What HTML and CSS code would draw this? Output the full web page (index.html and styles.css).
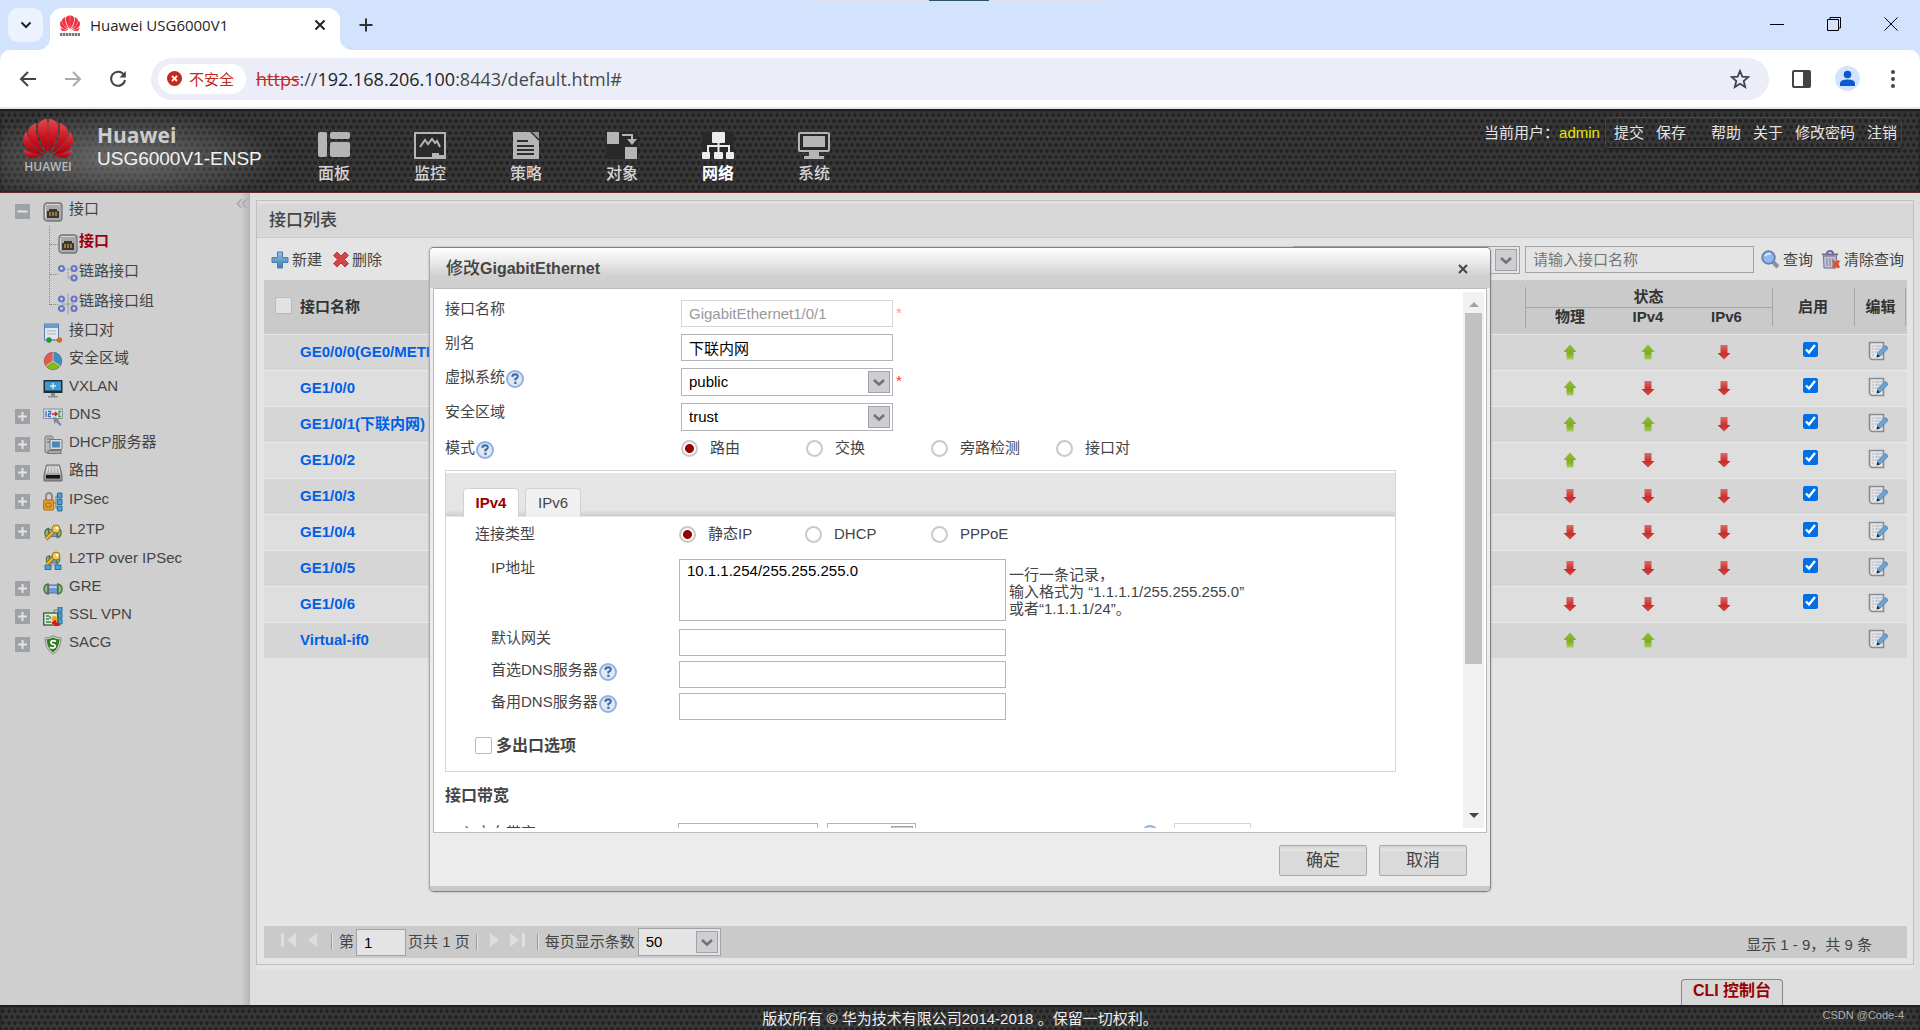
FILE: index.html
```html
<!DOCTYPE html>
<html lang="zh-CN">
<head>
<meta charset="utf-8">
<title>Huawei USG6000V1</title>
<link rel="stylesheet" href="styles.css">
</head>
<body>
<svg class="sprite" aria-hidden="true">
  <defs>
    <linearGradient id="g-red" x1="0" y1="0" x2="0" y2="1"><stop offset="0" stop-color="#dd4a48"/><stop offset=".5" stop-color="#cc1420"/><stop offset="1" stop-color="#a8000e"/></linearGradient>
    <linearGradient id="g-up" x1="0" y1="0" x2="0" y2="1"><stop offset="0" stop-color="#8fbb3a"/><stop offset=".6" stop-color="#7fae1e"/><stop offset="1" stop-color="#a9cb63"/></linearGradient>
    <linearGradient id="g-down" x1="0" y1="0" x2="0" y2="1"><stop offset="0" stop-color="#da6d66"/><stop offset=".6" stop-color="#c92b2b"/><stop offset="1" stop-color="#d05046"/></linearGradient>
    <linearGradient id="g-blue" x1="0" y1="0" x2="0" y2="1"><stop offset="0" stop-color="#8fc0e6"/><stop offset="1" stop-color="#3f7fb8"/></linearGradient>
    <linearGradient id="g-metal" x1="0" y1="0" x2="0" y2="1"><stop offset="0" stop-color="#c9c9c9"/><stop offset="1" stop-color="#8b8b8b"/></linearGradient>
    <g id="petals">
      <path d="M24.400 34C19 27 13 14 15 5C17 1 21 0 24.400 0C25 8 25 22 24.400 34Z"/>
      <path d="M22.500 35C13 30 4 20 5 12C6 8 10 5 13.500 4C11.500 14 16 26 22.500 35Z"/>
      <path d="M20.500 36C11 36 1 31 0 22C0 18 1 15 3 12.500C6 22 13 31 20.500 36Z"/>
      <path d="M19.500 37C13 38 8 41 4 37C2 35 1 33 1 31C8 34 14 36 19.500 37Z"/>
    </g>
    <symbol id="i-logo" viewBox="0 0 50 40"><use href="#petals"/><use href="#petals" transform="translate(50 0) scale(-1 1)"/></symbol>
    <symbol id="i-up" viewBox="0 0 14 16"><path d="M7 .5L13.500 8H10.500V15.500H3.500V8H.5Z" fill="url(#g-up)"/></symbol>
    <symbol id="i-down" viewBox="0 0 14 16"><path d="M7 15.500L13.500 9H10.500V1H3.500V9H.5Z" fill="url(#g-down)"/></symbol>
    <symbol id="i-edit" viewBox="0 0 20 20"><path d="M1.500 1.500H15.500V18.500H3.500L1.500 16.500Z" fill="#e4e6e8" stroke="#868b95" stroke-width="1.600"/><path d="M4 5H6M7 5H14M4 8H6M7 8H13M4 11H6M7 11H10M4 14H6" stroke="#aeb2b8"/><path d="M9 15.500L10 11.500L16.500 5Q19.500 4 19.500 8L13 14.500Z" fill="#6ea3d2" stroke="#4a7dac" stroke-width=".8"/><path d="M8.500 16.500L9.500 13L12 15.500Z" fill="#223"/></symbol>
    <symbol id="i-help" viewBox="0 0 18 18"><circle cx="9" cy="9" r="8" fill="#dfe8f3" stroke="#8fb0e4" stroke-width="2"/><path d="M6.300 6.800Q6.500 4.300 9.200 4.300Q12 4.400 11.800 6.700Q11.600 8 9.400 9V10.400" fill="none" stroke="#3d67a8" stroke-width="2"/><rect x="8.300" y="11.800" width="2.200" height="2.200" fill="#3d67a8"/></symbol>
    <symbol id="i-chev" viewBox="0 0 22 22"><rect x=".5" y=".5" width="21" height="21" fill="#ccced2" stroke="#a2a3a7"/><path d="M6 9L11 13.500L16 9" fill="none" stroke="#707276" stroke-width="2.500"/></symbol>
    <symbol id="i-port" viewBox="0 0 20 20"><rect x="1" y="1" width="18" height="18" rx="3" fill="#a9a9a9" stroke="#777" stroke-width="1.300"/><path d="M2.500 4V16M3 2.500H17" stroke="#d8d8d8"/><path d="M4 9H6V7H14V9H16V16H4Z" fill="#3a3733"/><path d="M7 10V14M10 10V14M13 10V14" stroke="#b8923c" stroke-width="1.500"/></symbol>
    <symbol id="i-link" viewBox="0 0 20 20"><path d="M3 5H17M10 5V14H17" stroke="#999" stroke-dasharray="2 1" fill="none"/><g fill="#c9d3ef" stroke="#6478c0" stroke-width="2.200"><circle cx="3.500" cy="4.500" r="2.500"/><circle cx="16" cy="4.500" r="2.500"/><circle cx="16" cy="14" r="2.500"/></g></symbol>
    <symbol id="i-linkgrp" viewBox="0 0 20 20"><path d="M10 0V20M4 10H16" stroke="#999" fill="none"/><g fill="#c9d3ef" stroke="#6478c0" stroke-width="2.200"><circle cx="3.500" cy="5" r="2.500"/><circle cx="16" cy="5" r="2.500"/><circle cx="3.500" cy="14.500" r="2.500"/><circle cx="16" cy="14.500" r="2.500"/></g></symbol>
    <symbol id="i-pair" viewBox="0 0 20 20"><rect x="1.500" y="1" width="14" height="16" fill="#e2e6ee" stroke="#5b7db4"/><rect x="2" y="1" width="13" height="4" fill="#6f98cf"/><path d="M4 8H13M4 11H13" stroke="#a9b1bd"/><path d="M7 17H16" stroke="#777" stroke-dasharray="2 1"/><circle cx="6" cy="17" r="2.700" fill="#1d9a2e"/><circle cx="16.500" cy="17" r="2.700" fill="#dd6a12"/></symbol>
    <symbol id="i-zone" viewBox="0 0 20 20"><path d="M10 10L10 1A9 9 0 0 0 2.500 15Z" fill="#e05a4e"/><path d="M10 10L10 1A9 9 0 0 1 17.500 15Z" fill="#3c8fc8"/><path d="M10 10L2.500 15A9 9 0 0 0 17.500 15Z" fill="#86b822"/><circle cx="10" cy="10" r="8.700" fill="none" stroke="#666" stroke-opacity=".5"/><path d="M10 1V10L3 15M10 10L17 15" stroke="#ddd" stroke-width=".7" fill="none"/></symbol>
    <symbol id="i-vxlan" viewBox="0 0 20 20"><rect x=".5" y="1" width="19" height="13" fill="#222b33"/><rect x="2" y="2.500" width="16" height="9" fill="#3f9ad0"/><path d="M10 4V10M7 7H13" stroke="#d5ecfa" stroke-width="1.500"/><path d="M8 14H12V17H15V18.500H5V17H8Z" fill="#8a8d90"/></symbol>
    <symbol id="i-dns" viewBox="0 0 20 20"><rect x=".7" y="2" width="18.600" height="9.500" fill="#dde" stroke="#8d8d98"/><path d="M3 4V10M5 4.500H7.500V7H5.500V9.500H8" stroke="#3377bb" stroke-width="1.300" fill="none"/><path d="M9 7H14M12 5L14 7L12 9" stroke="#c22" stroke-width="1.400" fill="none"/><path d="M18 4.500H16V9.500H18" stroke="#2a2" stroke-width="1.300" fill="none"/><path d="M10 10L17 11.500L15 13L18.500 17.500L17 19L13 15L11.500 17Z" fill="#8088a0"/></symbol>
    <symbol id="i-dhcp" viewBox="0 0 20 20"><rect x="2" y="1" width="8" height="17" rx="2" fill="#b9bcbc" stroke="#777"/><path d="M4 4H8M4 7H8" stroke="#666"/><rect x="7" y="4.500" width="12" height="10" rx="1" fill="#d6d9da" stroke="#777"/><rect x="9" y="6.500" width="8" height="6" fill="#4e87bb"/><rect x="5" y="15.500" width="13" height="3" fill="#aaa" stroke="#777"/></symbol>
    <symbol id="i-route" viewBox="0 0 20 20"><path d="M3.500 2H16.500L19 12V18H1V12Z" fill="url(#g-metal)" stroke="#666"/><path d="M4.500 4L3.500 10M7 4V10M10 4V10M13 4V10M15.500 4L16.500 10" stroke="#ececec"/><rect x="3" y="12" width="14" height="3.500" fill="#151515"/></symbol>
    <symbol id="i-ipsec" viewBox="0 0 20 20"><path d="M3 9V5Q3 1 6 1Q9 1 9 5V9" fill="none" stroke="#8b8b8b" stroke-width="2"/><rect x=".7" y="8" width="10" height="10" rx="1" fill="#e5a02f" stroke="#a86c10"/><path d="M3 11H8V15H3Z" fill="none" stroke="#a86c10"/><path d="M11 11H13V4H15M13 11V16H15" stroke="#777" fill="none"/><path d="M14.500 1H19V6H14.500ZM14.500 7.500H19V12.500H14.500ZM14.500 14H19V19H14.500Z" fill="#4da0d4" stroke="#27719f"/></symbol>
    <symbol id="i-gre" viewBox="0 0 20 20"><path d="M5 6H15V14H5Z" fill="#6c9dd8" stroke="#5074a4"/><path d="M6 8H14" stroke="#b4d0f0" stroke-width="2"/><path d="M5 5Q1 6 1 10Q1 14 5 15ZM15 5Q19 6 19 10Q19 14 15 15Z" fill="#9db49a" stroke="#3f7d36" stroke-width="1.500"/><path d="M5.500 5V15M14.500 5V15" stroke="#666" stroke-width="1.300"/></symbol>
    <symbol id="i-l2tp" viewBox="0 0 20 20"><use href="#i-gre" y="2" width="20" height="18"/><path d="M3 17L11 9" stroke="#9c7211" stroke-width="4"/><path d="M3 17L11 9" stroke="#e8b93c" stroke-width="2"/><circle cx="13" cy="7" r="4" fill="#f0ca58" stroke="#9c7211"/><circle cx="14" cy="6" r="1.300" fill="#fff"/></symbol>
    <symbol id="i-l2tpip" viewBox="0 0 20 20"><path d="M5 16V13H15V16" stroke="#777" fill="none"/><path d="M2 14H8V18.500H2ZM12 14H18V18.500H12Z" fill="#4da0d4" stroke="#27719f"/><use href="#i-gre" y="1" width="20" height="15"/><path d="M4 13L11 6" stroke="#9c7211" stroke-width="4"/><path d="M4 13L11 6" stroke="#e8b93c" stroke-width="2"/><circle cx="13" cy="5" r="4" fill="#f0ca58" stroke="#9c7211"/><circle cx="14" cy="4" r="1.300" fill="#fff"/></symbol>
    <symbol id="i-ssl" viewBox="0 0 20 20"><path d="M15 0H19V5H15ZM15 6H19V11H15ZM15 12H19V17H15Z" fill="#4da0d4" stroke="#27719f"/><path d="M11 9V3H15" stroke="#777" fill="none"/><rect x=".7" y="6" width="14" height="12" fill="#dfe8dc" stroke="#2f6b3a" stroke-width="1.400"/><path d="M3 9H6M3 12H6M3 15H8M7 9V12" stroke="#3f7f49" stroke-width="1.300"/><circle cx="11.500" cy="12" r="3" fill="#f2a51d"/><path d="M9 16.500L12 14.500L14 19M11 17.500H17" stroke="#d1191c" stroke-width="2.500" fill="none"/></symbol>
    <symbol id="i-sacg" viewBox="0 0 20 20"><path d="M10 .7Q14 3 18 3Q18 14 10 19.300Q2 14 2 3Q6 3 10 .7Z" fill="#d6d6d6" stroke="#888"/><path d="M10 2.500Q13 4 16.500 4.300Q16 13 10 17.500Q4 13 3.500 4.300Q7 4 10 2.500Z" fill="#2e7d1e"/><path d="M13 6.500Q10 4.800 8 6.700Q7.500 8.800 10 9.300Q13 10 12 12.200Q10 14 7 12.200" fill="none" stroke="#fff" stroke-width="1.700"/></symbol>
    <symbol id="i-plus" viewBox="0 0 15 15"><rect width="15" height="15" fill="#9ea1a5"/><path d="M7.500 3V12M3 7.500H12" stroke="#e4e4e4" stroke-width="2"/></symbol>
    <symbol id="i-minus" viewBox="0 0 15 15"><rect width="15" height="15" fill="#9ea1a5"/><path d="M2.500 7.500H12.500" stroke="#e4e4e4" stroke-width="2"/></symbol>
  </defs>
</svg>

<header class="browser">
  <div class="tabstrip">
    <div class="peek"></div>
    <button class="tab-search" aria-label="搜索标签页"><svg width="12" height="8" viewBox="0 0 12 8"><path d="M1.500 1.500L6 6L10.500 1.500" fill="none" stroke="#202124" stroke-width="2"/></svg></button>
    <div class="tab">
      <span class="favicon"><svg width="20" height="17" fill="#ee3344"><use href="#i-logo"/></svg><i></i></span>
      <span class="tab-title">Huawei USG6000V1</span>
      <button class="tab-close" aria-label="关闭"><svg width="12" height="12" viewBox="0 0 12 12"><path d="M1.500 1.500L10.500 10.500M10.500 1.500L1.500 10.500" stroke="#202124" stroke-width="2"/></svg></button>
    </div>
    <button class="tab-new" aria-label="新标签页"><svg width="14" height="14" viewBox="0 0 14 14"><path d="M7 .5V13.500M.5 7H13.500" stroke="#333" stroke-width="2"/></svg></button>
    <div class="win-ctl">
      <svg width="14" height="14" viewBox="0 0 14 14"><path d="M0 7.500H14" stroke="#000"/></svg>
      <svg width="14" height="14" viewBox="0 0 14 14"><path d="M.5 2.500H11.500V13.500H.5ZM3 2V.5H13.500V11H12" fill="none" stroke="#000"/></svg>
      <svg width="14" height="14" viewBox="0 0 14 14"><path d="M.5 .5L13.500 13.500M13.500 .5L.5 13.500" stroke="#000"/></svg>
    </div>
  </div>
  <div class="toolbar">
    <button aria-label="返回"><svg width="18" height="16" viewBox="0 0 18 16"><path d="M9 1L2 8L9 15M2 8H17" fill="none" stroke="#444" stroke-width="2"/></svg></button>
    <button aria-label="前进"><svg width="18" height="16" viewBox="0 0 18 16"><path d="M9 1L16 8L9 15M1 8H16" fill="none" stroke="#aaa" stroke-width="2"/></svg></button>
    <button aria-label="重新加载"><svg width="18" height="18" viewBox="0 0 18 18"><path d="M15 5A7 7 0 1 0 16 10" fill="none" stroke="#444" stroke-width="2"/><path d="M16.800 1V7.500H10.500Z" fill="#444"/></svg></button>
    <div class="omnibox">
      <span class="chip"><svg width="15" height="15" viewBox="0 0 15 15"><circle cx="7.500" cy="7.500" r="7.500" fill="#c5281c"/><path d="M5 5L10 10M10 5L5 10" stroke="#fff" stroke-width="1.800"/></svg>不安全</span>
      <span class="url"><s>https</s>://<b>192.168.206.100</b>:8443/default.html#</span>
      <svg width="20" height="20" viewBox="0 0 20 20"><path d="M10 2L12.300 7.700L18.300 8.100L13.700 12L15.200 18L10 14.700L4.800 18L6.300 12L1.700 8.100L7.700 7.700Z" fill="none" stroke="#444" stroke-width="1.800"/></svg>
    </div>
    <svg class="t-panel" width="19" height="18" viewBox="0 0 19 18"><rect x="1" y="1" width="17" height="16" rx="1" fill="none" stroke="#444" stroke-width="2"/><rect x="11" y="1" width="7" height="16" fill="#444"/></svg>
    <svg class="t-user" width="25" height="25" viewBox="0 0 25 25"><circle cx="12.500" cy="12.500" r="12.500" fill="#d3e3fd"/><circle cx="12.500" cy="8.500" r="3.800" fill="#0b57d0"/><path d="M5 20V17.500Q5 13.500 12.500 13.500Q20 13.500 20 17.500V20Z" fill="#0b57d0"/></svg>
    <svg class="t-menu" width="4" height="18" viewBox="0 0 4 18" fill="#444"><circle cx="2" cy="2" r="2"/><circle cx="2" cy="9" r="2"/><circle cx="2" cy="16" r="2"/></svg>
  </div>
</header>

<div class="page">
  <header class="banner mesh">
    <div class="brand">
      <div class="logo"><svg width="50" height="40" fill="url(#g-red)"><use href="#i-logo"/></svg><span>HUAWEI</span></div>
      <div class="product"><strong>Huawei</strong><span>USG6000V1-ENSP</span></div>
    </div>
    <nav class="mainnav">
      <a href="#"><svg width="32" height="27" viewBox="0 0 32 27" fill="#b5b5b5"><rect width="9" height="25" rx="2"/><rect x="12" width="20" height="7" rx="2"/><rect x="12" y="10" width="20" height="15" rx="2"/></svg>面板</a>
      <a href="#"><svg width="32" height="27" viewBox="0 0 32 27"><rect x="1" y="1" width="30" height="25" fill="#2a2a2a" stroke="#b5b5b5" stroke-width="2"/><path d="M6 15L11 8L14 12L18 7L21 11L23 9L26 15" fill="none" stroke="#b5b5b5" stroke-width="2"/><path d="M18 21H25V23H30V25H18Z" fill="#b5b5b5"/></svg>监控</a>
      <a href="#"><svg width="28" height="27" viewBox="0 0 28 27"><path d="M1 0H18L27 9V27H1Z" fill="#b5b5b5"/><path d="M20 0H27V7Z" fill="#999"/><path d="M5 9H16M5 14H22M5 18H22M5 22H22" stroke="#2f2f2f" stroke-width="2"/></svg>策略</a>
      <a href="#"><svg width="32" height="27" viewBox="0 0 32 27"><rect width="32" height="27" fill="#292929"/><rect x="1" width="12" height="12" fill="#b5b5b5"/><rect x="19" y="15" width="12" height="12" fill="#b5b5b5"/><path d="M16 3H26V9" fill="none" stroke="#b5b5b5" stroke-width="2"/><path d="M21 7H31L26 13Z" fill="#b5b5b5"/></svg>对象</a>
      <a href="#" class="on"><svg width="32" height="27" viewBox="0 0 32 27" fill="#ededed"><rect width="32" height="27" fill="#292929"/><rect x="10" width="13" height="11" rx="1"/><rect y="20" width="8" height="7" rx="1"/><rect x="12" y="20" width="9" height="7" rx="1"/><rect x="24" y="20" width="8" height="7" rx="1"/><path d="M16.500 10V20M6 20V14H27V20" fill="none" stroke="#ededed" stroke-width="2"/></svg>网络</a>
      <a href="#"><svg width="32" height="27" viewBox="0 0 32 27"><rect x="1" y="1" width="30" height="18" rx="1" fill="#292929" stroke="#b5b5b5" stroke-width="2"/><rect x="5" y="4" width="22" height="11" fill="#b5b5b5"/><path d="M11 20H21V24H26V27H6V24H11Z" fill="#b5b5b5"/></svg>系统</a>
    </nav>
    <div class="user">
      <span>当前用户：</span><em>admin</em>
      <div class="links"><a href="#">提交</a><a href="#">保存</a><a href="#" class="far">帮助</a><a href="#">关于</a><a href="#">修改密码</a><a href="#">注销</a></div>
    </div>
  </header>

  <div class="work">
    <aside class="side">
      <span class="collapse">«</span>
      <ul class="tree">
        <li class="first"><svg class="tg"><use href="#i-minus"/></svg><svg class="ic"><use href="#i-port"/></svg><a href="#">接口</a></li>
        <li class="group"><ul>
          <li><svg class="ic"><use href="#i-port"/></svg><a href="#" class="cur">接口</a></li>
          <li><svg class="ic"><use href="#i-link"/></svg><a href="#">链路接口</a></li>
          <li><svg class="ic"><use href="#i-linkgrp"/></svg><a href="#">链路接口组</a></li>
        </ul></li>
        <li><span class="tg"></span><svg class="ic"><use href="#i-pair"/></svg><a href="#">接口对</a></li>
        <li><span class="tg"></span><svg class="ic"><use href="#i-zone"/></svg><a href="#">安全区域</a></li>
        <li><span class="tg"></span><svg class="ic"><use href="#i-vxlan"/></svg><a href="#">VXLAN</a></li>
        <li><svg class="tg"><use href="#i-plus"/></svg><svg class="ic"><use href="#i-dns"/></svg><a href="#">DNS</a></li>
        <li><svg class="tg"><use href="#i-plus"/></svg><svg class="ic"><use href="#i-dhcp"/></svg><a href="#">DHCP服务器</a></li>
        <li><svg class="tg"><use href="#i-plus"/></svg><svg class="ic"><use href="#i-route"/></svg><a href="#">路由</a></li>
        <li class="tall"><svg class="tg"><use href="#i-plus"/></svg><svg class="ic"><use href="#i-ipsec"/></svg><a href="#">IPSec</a></li>
        <li class="tall"><svg class="tg"><use href="#i-plus"/></svg><svg class="ic"><use href="#i-l2tp"/></svg><a href="#">L2TP</a></li>
        <li><span class="tg"></span><svg class="ic"><use href="#i-l2tpip"/></svg><a href="#">L2TP over IPSec</a></li>
        <li><svg class="tg"><use href="#i-plus"/></svg><svg class="ic"><use href="#i-gre"/></svg><a href="#">GRE</a></li>
        <li><svg class="tg"><use href="#i-plus"/></svg><svg class="ic"><use href="#i-ssl"/></svg><a href="#">SSL VPN</a></li>
        <li><svg class="tg"><use href="#i-plus"/></svg><svg class="ic"><use href="#i-sacg"/></svg><a href="#">SACG</a></li>
      </ul>
    </aside>

    <main class="main">
      <section class="panel">
        <h1>接口列表</h1>
        <div class="actions">
          <button><svg width="18" height="18" viewBox="0 0 18 18"><path d="M6.500 1H11.500V6.500H17V11.500H11.500V17H6.500V11.500H1V6.500H6.500Z" fill="url(#g-blue)" stroke="#487dab"/></svg>新建</button>
          <button class="del"><svg width="16" height="17" viewBox="0 0 16 17"><path d="M4 1L8 5L12 1L15.500 4.500L11.500 8.500L15.500 12.500L12 16L8 12L4 16L.5 12.500L4.500 8.500L.5 4.500Z" fill="#cf4848" stroke="#b93a3c"/></svg>删除</button>
          <span class="grow"></span>
          <span class="sel dim filter"><select aria-label="查询条件"><option>接口名称</option></select><svg><use href="#i-chev"/></svg></span>
          <input class="field dim search" placeholder="请输入接口名称" aria-label="接口名称">
          <button><svg width="19" height="19" viewBox="0 0 19 19"><path d="M12 12L17 17" stroke="#8e8e93" stroke-width="4"/><circle cx="7.500" cy="7.500" r="6.300" fill="#8db8f2" stroke="#6580ac" stroke-width="1.800"/><path d="M4 6Q6 3 10 4" stroke="#d7e6fa" stroke-width="2" fill="none"/></svg>查询</button>
          <button class="clear"><svg width="20" height="19" viewBox="0 0 20 19"><path d="M1 4.500H17M6 3.500Q6 1 9 1Q12 1 12 3.500" stroke="#6d6d96" stroke-width="2" fill="none"/><path d="M2.500 6H15.500L15 18H3Z" fill="#c2c2d4" stroke="#6d6d96"/><path d="M6 8V16M9 8V16M12 8V16" stroke="#7d7da3"/><path d="M11 11L13 10L14.700 12L17 10L19 11L17.500 14L19 17L17 18.500L14.700 16.500L12.500 18.500L11 17L12.500 14Z" fill="#e0512f"/></svg>清除查询</button>
        </div>
        <table class="grid">
          <colgroup><col class="c-ck"><col><col class="c-a"><col class="c-b"><col class="c-c"><col class="c-en"><col class="c-ed"></colgroup>
          <thead>
            <tr><th rowspan="2"><input type="checkbox" class="box dimbox" aria-label="全选"></th><th rowspan="2" class="nm">接口名称</th><th colspan="3" class="st">状态</th><th rowspan="2" class="vl">启用</th><th rowspan="2" class="vl vr">编辑</th></tr>
            <tr><th class="s1">物理</th><th>IPv4</th><th class="s3">IPv6</th></tr>
          </thead>
          <tbody>
            <tr><td></td><td class="nm"><a href="#">GE0/0/0(GE0/METH)</a></td><td><svg class="ar"><use href="#i-up"/></svg></td><td><svg class="ar"><use href="#i-up"/></svg></td><td><svg class="ar"><use href="#i-down"/></svg></td><td><input type="checkbox" checked aria-label="启用"></td><td><svg class="ed"><use href="#i-edit"/></svg></td></tr>
            <tr><td></td><td class="nm"><a href="#">GE1/0/0</a></td><td><svg class="ar"><use href="#i-up"/></svg></td><td><svg class="ar"><use href="#i-down"/></svg></td><td><svg class="ar"><use href="#i-down"/></svg></td><td><input type="checkbox" checked aria-label="启用"></td><td><svg class="ed"><use href="#i-edit"/></svg></td></tr>
            <tr><td></td><td class="nm"><a href="#">GE1/0/1(下联内网)</a></td><td><svg class="ar"><use href="#i-up"/></svg></td><td><svg class="ar"><use href="#i-up"/></svg></td><td><svg class="ar"><use href="#i-down"/></svg></td><td><input type="checkbox" checked aria-label="启用"></td><td><svg class="ed"><use href="#i-edit"/></svg></td></tr>
            <tr><td></td><td class="nm"><a href="#">GE1/0/2</a></td><td><svg class="ar"><use href="#i-up"/></svg></td><td><svg class="ar"><use href="#i-down"/></svg></td><td><svg class="ar"><use href="#i-down"/></svg></td><td><input type="checkbox" checked aria-label="启用"></td><td><svg class="ed"><use href="#i-edit"/></svg></td></tr>
            <tr><td></td><td class="nm"><a href="#">GE1/0/3</a></td><td><svg class="ar"><use href="#i-down"/></svg></td><td><svg class="ar"><use href="#i-down"/></svg></td><td><svg class="ar"><use href="#i-down"/></svg></td><td><input type="checkbox" checked aria-label="启用"></td><td><svg class="ed"><use href="#i-edit"/></svg></td></tr>
            <tr><td></td><td class="nm"><a href="#">GE1/0/4</a></td><td><svg class="ar"><use href="#i-down"/></svg></td><td><svg class="ar"><use href="#i-down"/></svg></td><td><svg class="ar"><use href="#i-down"/></svg></td><td><input type="checkbox" checked aria-label="启用"></td><td><svg class="ed"><use href="#i-edit"/></svg></td></tr>
            <tr><td></td><td class="nm"><a href="#">GE1/0/5</a></td><td><svg class="ar"><use href="#i-down"/></svg></td><td><svg class="ar"><use href="#i-down"/></svg></td><td><svg class="ar"><use href="#i-down"/></svg></td><td><input type="checkbox" checked aria-label="启用"></td><td><svg class="ed"><use href="#i-edit"/></svg></td></tr>
            <tr><td></td><td class="nm"><a href="#">GE1/0/6</a></td><td><svg class="ar"><use href="#i-down"/></svg></td><td><svg class="ar"><use href="#i-down"/></svg></td><td><svg class="ar"><use href="#i-down"/></svg></td><td><input type="checkbox" checked aria-label="启用"></td><td><svg class="ed"><use href="#i-edit"/></svg></td></tr>
            <tr><td></td><td class="nm"><a href="#">Virtual-if0</a></td><td><svg class="ar"><use href="#i-up"/></svg></td><td><svg class="ar"><use href="#i-up"/></svg></td><td></td><td></td><td><svg class="ed"><use href="#i-edit"/></svg></td></tr>
          </tbody>
        </table>
        <div class="pager">
          <svg class="p-first" width="15" height="14" viewBox="0 0 15 14" fill="#dedede"><rect width="3" height="14"/><path d="M15 0V14L6 7Z"/></svg>
          <svg class="p-prev" width="9" height="14" viewBox="0 0 9 14" fill="#dedede"><path d="M9 0V14L0 7Z"/></svg>
          <i></i><label for="pg">第</label><input id="pg" class="field dim pg" value="1"><span>页共 1 页</span><i></i>
          <svg class="p-next" width="9" height="14" viewBox="0 0 9 14" fill="#dedede"><path d="M0 0V14L9 7Z"/></svg>
          <svg class="p-last" width="15" height="14" viewBox="0 0 15 14" fill="#dedede"><rect x="12" width="3" height="14"/><path d="M0 0V14L9 7Z"/></svg>
          <i></i><label for="ps">每页显示条数</label><span class="sel dim ps"><select id="ps"><option>50</option></select><svg><use href="#i-chev"/></svg></span>
          <span class="total">显示 1 - 9，共 9 条</span>
        </div>
      </section>
      <button class="cli">CLI 控制台</button>
    </main>
  </div>

  <footer class="foot mesh"><span>版权所有 © 华为技术有限公司2014-2018 。保留一切权利。</span><small>CSDN @Code-4</small></footer>

  <div class="overlay">
    <form class="dialog">
      <div class="d-title"><h2><span>修改</span>GigabitEthernet</h2><button type="button" aria-label="关闭"><svg width="10" height="10" viewBox="0 0 10 10"><path d="M1 1L9 9M9 1L1 9" stroke="#444" stroke-width="2"/></svg></button></div>
      <div class="d-frame">
        <div class="d-body">
          <div class="rows">
            <div class="row"><label for="f1">接口名称</label><input id="f1" class="field w" value="GigabitEthernet1/0/1" disabled><span class="req pale">*</span></div>
            <div class="row"><label for="f2">别名</label><input id="f2" class="field w" value="下联内网"></div>
            <div class="row"><label for="f3">虚拟系统<svg class="help"><use href="#i-help"/></svg></label><span class="sel w"><select id="f3"><option>public</option></select><svg><use href="#i-chev"/></svg></span><span class="req">*</span></div>
            <div class="row"><label for="f4">安全区域</label><span class="sel w"><select id="f4"><option>trust</option></select><svg><use href="#i-chev"/></svg></span></div>
            <div class="row mode"><span class="lb">模式<svg class="help"><use href="#i-help"/></svg></span>
              <label class="rd"><input type="radio" name="mode" checked>路由</label><label class="rd"><input type="radio" name="mode">交换</label><label class="rd"><input type="radio" name="mode">旁路检测</label><label class="rd"><input type="radio" name="mode">接口对</label></div>
          </div>
          <div class="ipbox">
            <div class="tabs"><button type="button" class="act">IPv4</button><button type="button">IPv6</button></div>
            <div class="ipform">
              <div class="row conn"><span class="lb">连接类型</span><label class="rd"><input type="radio" name="conn" checked>静态IP</label><label class="rd"><input type="radio" name="conn">DHCP</label><label class="rd"><input type="radio" name="conn">PPPoE</label></div>
              <div class="row ip"><label for="f5" class="in">IP地址</label><textarea id="f5" class="field wide">10.1.1.254/255.255.255.0</textarea><p>一行一条记录，<br>输入格式为 “1.1.1.1/255.255.255.0”<br>或者“1.1.1.1/24”。</p></div>
              <div class="row"><label for="f6" class="in">默认网关</label><input id="f6" class="field wide"></div>
              <div class="row"><label for="f7" class="in">首选DNS服务器<svg class="help"><use href="#i-help"/></svg></label><input id="f7" class="field wide"></div>
              <div class="row"><label for="f8" class="in">备用DNS服务器<svg class="help"><use href="#i-help"/></svg></label><input id="f8" class="field wide"></div>
              <label class="multi"><input type="checkbox" class="box">多出口选项</label>
            </div>
          </div>
          <h3>接口带宽</h3>
          <div class="row bw"><label for="f9" class="in">入方向带宽</label><input id="f9" class="field bw1"><span class="sel bw2"><select aria-label="单位"><option>Mbps</option></select><svg><use href="#i-chev"/></svg></span><svg class="help bwh"><use href="#i-help"/></svg><input class="field bw3" disabled aria-label="过载保护阈值"></div>
        </div>
        <div class="scroll">
          <svg width="10" height="5" viewBox="0 0 10 5"><path d="M0 5L5 0L10 5Z" fill="#a3a3a3"/></svg>
          <div class="track"><div class="thumb"></div></div>
          <svg width="10" height="5" viewBox="0 0 10 5"><path d="M0 0L5 5L10 0Z" fill="#444"/></svg>
        </div>
      </div>
      <div class="d-foot"><button type="button">确定</button><button type="button">取消</button></div>
    </form>
  </div>
</div>
</body>
</html>
```
FILE: styles.css
```css
* { box-sizing: border-box; }
body {
  margin: 0;
  min-height: 100vh;
  display: flex;
  flex-direction: column;
  font: 15px/18px "Liberation Sans", "Noto Sans CJK SC", sans-serif;
  color: #444;
}
button, input, select, textarea { font: inherit; color: inherit; margin: 0; }
button { border: 0; padding: 0; background: none; }
a { color: inherit; text-decoration: none; }
ul { list-style: none; margin: 0; padding: 0; }
svg { display: block; flex: none; }
.sprite { position: absolute; width: 0; height: 0; }

/* browser chrome */
.browser { background: #d3e2fd; font-family: "Open Sans", "Noto Sans CJK SC", sans-serif; }
.tabstrip { height: 50px; display: flex; align-items: flex-start; padding: 8px 17px 0 8px; position: relative; }
.peek { position: absolute; top: 0; left: 50%; width: 301px; height: 1px; margin-left: -151px; background: linear-gradient(90deg, #e0e2e6 120px, #2e5260 120px, #2e5260 180px, #e0e2e6 180px); }
.tab-search { width: 35px; height: 34px; border-radius: 10px; background: #ecf2fe; display: grid; place-items: center; }
.tab { position: relative; width: 290px; height: 42px; margin-left: 7px; padding: 0 14px 8px 10px; background: #fff; border-radius: 12px 12px 0 0; display: flex; align-items: center; }
.tab::before, .tab::after { content: ""; position: absolute; bottom: 0; width: 12px; height: 12px; }
.tab::before { left: -12px; background: radial-gradient(circle at 0 0, transparent 12px, #fff 12px); }
.tab::after { right: -12px; background: radial-gradient(circle at 100% 0, transparent 12px, #fff 12px); }
.favicon i { display: block; width: 20px; height: 3px; margin-top: 1px; background: repeating-linear-gradient(90deg, #777 0 2px, #ccc 2px 3px); }
.tab-title { flex: 1; margin-left: 10px; color: #1f1f1f; }
.tab-new { margin: 10px 0 0 19px; }
.win-ctl { margin: 9px 0 0 auto; display: flex; gap: 43px; padding-right: 5px; }
.toolbar { background: #fff; border-radius: 10px 10px 0 0; border-bottom: 2px solid #e3eae8; height: 59px; padding: 0 25px 0 19px; display: flex; align-items: center; }
.toolbar button { margin-right: 27px; }
.omnibox { flex: 1; height: 42px; border-radius: 21px; background: #ebeef8; display: flex; align-items: center; padding: 0 19px 0 7px; margin-left: -3px; }
.chip { height: 30px; border-radius: 15px; background: #fff; color: #c5281c; padding: 0 12px 0 9px; display: flex; align-items: center; gap: 7px; }
.url { flex: 1; margin-left: 10px; font-size: 18px; line-height: 24px; color: #474747; }
.url b { font-weight: 400; color: #1f1f1f; }
.url s { color: #c5281c; }
.t-panel { margin-left: 23px; }
.t-user { margin-left: 24px; }
.t-menu { margin-left: 31px; }

/* application shell */
.page { flex: 1; display: flex; flex-direction: column; position: relative; }
.mesh {
  background-color: #373738;
  background-image: radial-gradient(circle, #232324 1px, #232324 2px, transparent 2px), radial-gradient(circle, #232324 1px, #232324 2px, transparent 2px);
  background-size: 6px 12px;
  background-position: 0 0, 3px 6px;
}
.banner { height: 84px; border-bottom: 1px solid #5f2b2c; box-shadow: inset 0 2px 3px #1c1c1c, inset 0 -2px 2px #2a2a2a; display: flex; align-items: flex-start; position: relative; }
.brand { display: flex; width: 286px; height: 82px; padding: 10px 0 0 23px; background: radial-gradient(ellipse at 42% 60%, #8c8c8ca0, transparent 70%); }
.logo { width: 50px; display: flex; flex-direction: column; align-items: center; font: 600 12px/16px "Open Sans", sans-serif; color: #bbb; }
.product { margin: 4px 0 0 24px; display: flex; flex-direction: column; }
.product strong { font: bold 21px/25px "Open Sans", sans-serif; color: #ccc; }
.product span { font-size: 19px; line-height: 22px; color: #f2f2f2; }
.mainnav { display: flex; }
.mainnav a { width: 96px; padding-top: 23px; display: flex; flex-direction: column; align-items: center; gap: 5px; font-size: 16px; line-height: 20px; font-weight: 500; color: #d5d5d5; }
.mainnav a.on { color: #fff; font-weight: bold; }
.user { margin-left: auto; padding: 8px 18px 0 0; display: flex; align-items: center; color: #e4e4e4; }
.user em { font-style: normal; color: #e6e600; margin-right: 5px; }
.links { display: flex; gap: 12px; padding: 5px 4px 5px 8px; line-height: 19px; border: 1px solid #454546; border-radius: 4px; box-shadow: 0 1px 2px #1c1c1c; }
.links .far { margin-left: 13px; }
.work { flex: 1; display: flex; }

/* navigation tree */
.side { width: 250px; position: relative; background: linear-gradient(90deg, transparent 241px, #b4b4b4 250px), #cfcfcf; }
.collapse { position: absolute; top: 0; right: 2px; font-size: 22px; line-height: 20px; color: #aaa; }
.tree li { display: flex; align-items: center; height: 28px; padding-left: 15px; }
.tree .first { height: 32px; }
.tree .tall { height: 30px; }
.tg { width: 15px; height: 15px; margin: 4px 13px 0 0; }
.ic { width: 20px; height: 20px; margin: 6px 6px 0 0; }
.tree .group { height: auto; padding: 1px 0 0 49px; }
.group ul { position: relative; }
.group ul::before { content: ""; position: absolute; top: 0; left: 0; height: 79px; border-left: 1px dotted #888; }
.tree .group li { position: relative; height: 30px; padding-left: 9px; }
.group li::before { content: ""; position: absolute; left: 1px; top: 18px; width: 8px; border-top: 1px dotted #888; }
.group .ic { margin-right: 1px; }
.cur { color: #990010; font-weight: bold; }

/* interface list */
.main { flex: 1; display: flex; flex-direction: column; background: #dedede; padding: 7px 6px 0; }
.panel { flex: 1; display: flex; flex-direction: column; border: 1px solid #bfbfbf; background: #e4e4e4; box-shadow: 0 5px 0 #e4e4e4; }
h1 { margin: 0; padding: 3px 12px 0; font-size: 17px; line-height: 33px; font-weight: 500; background: linear-gradient(#e4e4e4 1px, #d7d7d7 4px); border-bottom: 1px solid #c9c9c9; }
.actions { display: flex; align-items: center; height: 42px; padding: 1px 9px 0 14px; }
.actions button { display: flex; align-items: center; gap: 3px; }
.actions .del { margin-left: 11px; }
.actions .clear { margin-left: 8px; }
.grow { flex: 1; }
.field { height: 27px; border: 1px solid #b4b5ba; background: #fff; border-radius: 0; padding: 0 7px; color: #000; outline: 0; }
.field:disabled { border-color: #d5d5d8; color: #999; }
.field.dim { background: #e4e4e4; border-color: #a2a3a7; }
.sel { position: relative; display: block; height: 28px; }
.sel select { width: 100%; height: 100%; appearance: none; border: 1px solid #b4b5ba; border-radius: 0; background: #fff; color: #000; padding: 0 7px; }
.sel svg { position: absolute; top: 3px; right: 3px; width: 22px; height: 22px; pointer-events: none; }
.dim select { background: #e4e4e4; border-color: #a2a3a7; }
.filter { width: 227px; margin-right: 5px; }
.search { width: 229px; margin-right: 7px; }
.search::placeholder { color: #757575; }
.grid { width: auto; margin: 0 6px 0 7px; table-layout: fixed; border-collapse: collapse; }
.c-ck { width: 36px; } .c-a { width: 90px; } .c-b { width: 66px; } .c-c { width: 91px; } .c-en { width: 82px; } .c-ed { width: 53px; }
.grid th { height: 27px; padding: 0; background-color: #cacaca; background-repeat: no-repeat; color: #333; font-weight: bold; }
.grid thead tr + tr th { padding-bottom: 7px; }
.grid .st { padding-top: 7px; border-bottom: 1px solid #a5a5a5; background-image: linear-gradient(#a5a5a5, #a5a5a5); background-size: 1px 20px; background-position: 0 100%; }
.grid .s1 { background-image: linear-gradient(#a5a5a5, #a5a5a5); background-size: 1px 20px; background-position: 0 0; }
.grid .vl { background-image: linear-gradient(#a5a5a5, #a5a5a5); background-size: 1px 38px; background-position: 0 8px; }
.grid .vr { background-image: linear-gradient(#a5a5a5, #a5a5a5), linear-gradient(#a5a5a5, #a5a5a5); background-position: 0 8px, 51px 8px; }
.grid td { height: 36px; padding: 0; text-align: center; border-top: 1px solid #e8e8e8; background: #dedede; }
.grid td:nth-child(n+5) { padding-right: 5px; }
.grid tr:nth-child(odd) td { background: #d6d6d6; }
.grid .nm { text-align: left; }
.grid td a { color: #0060e5; font-weight: bold; }
.ar { width: 14px; height: 16px; margin: -1px auto 0; }
.ed { width: 20px; height: 20px; margin: -3px auto 0; }
.grid td input { display: block; width: 15px; height: 15px; margin: -5px auto 0; accent-color: #006fe8; }
.box { appearance: none; display: block; width: 17px; height: 17px; border: 1px solid #b9babf; border-radius: 2px; background: #fff; }
.dimbox { margin: -3px auto 0 11px; background: #e2e2e2; }
.pager { margin: auto 6px 6px 7px; height: 32px; background: #cacaca; display: flex; align-items: center; padding: 0 35px 0 17px; }
.pager i { width: 2px; height: 16px; border-left: 1px solid #999; border-right: 1px solid #e4e4e4; }
.p-first { margin-bottom: 4px; }
.p-prev { margin: 0 14px 4px 12px; }
.pager label { margin-left: 6px; }
.pg { width: 50px; margin: 0 2px; }
.pager span + i { margin-left: 6px; }
.p-next { margin: 0 11px 4px 12px; }
.p-last { margin: 0 12px 4px 0; }
.ps { width: 83px; margin-left: 3px; }
.total { margin-left: auto; padding-top: 5px; }
.cli { align-self: flex-end; margin: 14px 131px 0 0; width: 102px; height: 26px; padding-bottom: 3px; border: 1px solid #888; border-bottom: 0; border-radius: 4px 4px 0 0; background: #d8d8d8; color: #990000; font-size: 16px; font-weight: bold; }
.foot { height: 25px; display: grid; place-items: center; position: relative; color: #eee; line-height: 22px; padding: 3px 0 0; box-shadow: inset 0 2px 3px #1c1c1c; }
.foot small { position: absolute; right: 16px; top: 0; font-size: 11px; line-height: 20px; color: #b0b0b0; }

/* edit dialog */
.overlay { position: absolute; inset: 0; display: grid; place-items: center; }
.dialog { width: 1062px; max-width: 100%; border: 1px solid #808285; border-radius: 5px; background: #ececec; overflow: hidden; border-left-color: #aaa; box-shadow: 0 0 2px #999; }
.d-title { height: 40px; padding: 1px 22px 0 16px; display: flex; align-items: center; justify-content: space-between; background: linear-gradient(#fff, #e6e6e6 40%, #d0d0d0 70%, #cfcfcf); }
h2 { margin: 0; font-size: 16px; line-height: 20px; font-weight: bold; }
h2 span { font-size: 17px; font-weight: 500; }
.d-frame { height: 545px; margin: 0 3px; padding: 3px 2px 4px; border: 1px solid #bbb; background: #fff; display: flex; }
.d-body { flex: 1; padding: 8px 0 0 9px; overflow: hidden; }
.rows { display: flex; flex-direction: column; gap: 7px; }
.row { display: flex; align-items: flex-start; }
.row > label:first-child, .lb { width: 236px; display: flex; flex: none; }
.help { width: 18px; height: 18px; margin: 2px 0 0 1px; }
.w { width: 212px; }
.req { color: #f33; margin: 4px 0 0 3px; }
.pale { color: #f99; }
.mode { min-height: 25px; padding-top: 1px; }
.row .rd { width: 125px; display: flex; align-items: center; gap: 12px; line-height: 18px; white-space: nowrap; }
input[type="radio"] { appearance: none; width: 17px; height: 17px; border: 2px solid #c9c9c9; border-radius: 50%; background: #fff; flex: none; }
input[type="radio"]:checked { background: radial-gradient(circle, #990000 4px, #fff 5px); }
.ipbox { margin: 7px 67px 0 0; border: 1px solid #d5d5d5; }
.tabs { height: 46px; padding-left: 17px; display: flex; align-items: flex-end; gap: 6px; background: linear-gradient(#fff 2px, #e5e5e5 2px 39px, #cdcdcd 45px, #fff 46px); }
.tabs button { width: 56px; height: 29px; border: 1px solid #d2d2d2; border-bottom: 0; border-radius: 4px 4px 0 0; background: #f0f0f0; }
.tabs .act { background: #fff; color: #990000; font-weight: bold; }
.ipform { padding: 8px 0 17px 29px; display: flex; flex-direction: column; gap: 5px; }
.ipform .row > label:first-child, .ipform .lb { width: 204px; }
.row > .in:first-child { padding-left: 16px; }
.conn { height: 29px; }
.conn .rd { width: 126px; }
.ip { margin-bottom: 3px; }
.wide { width: 327px; }
textarea.field { height: 62px; padding: 2px 7px; resize: none; display: block; }
.ip p { margin: 7px 0 0 3px; line-height: 17px; }
.multi { margin-top: 12px; display: flex; gap: 4px; height: 17px; font-size: 16px; font-weight: bold; }
h3 { margin: 15px 0 18px; font-size: 16px; line-height: 18px; font-weight: bold; }
.row.bw > label:first-child { width: 233px; padding-top: 1px; }
.bw1 { width: 140px; }
.bw2 { width: 89px; margin-left: 9px; }
.bwh { margin-left: 225px; }
.bw3 { width: 77px; margin-left: 15px; }
.scroll { width: 21px; background: #f1f1f1; display: flex; flex-direction: column; align-items: center; padding: 10px 0; gap: 6px; }
.track { flex: 1; width: 17px; }
.thumb { height: 71%; background: #c1c1c1; }
.d-foot { height: 58px; border-bottom: 5px solid #c8c8c8; padding: 12px 23px 0; display: flex; justify-content: flex-end; gap: 12px; }
.d-foot button { width: 88px; height: 31px; border: 1px solid #a9aab0; border-radius: 2px; background: linear-gradient(#d0d0d0, #e4e4e4 4px, #dadada 6px); font-size: 17px; }
```
